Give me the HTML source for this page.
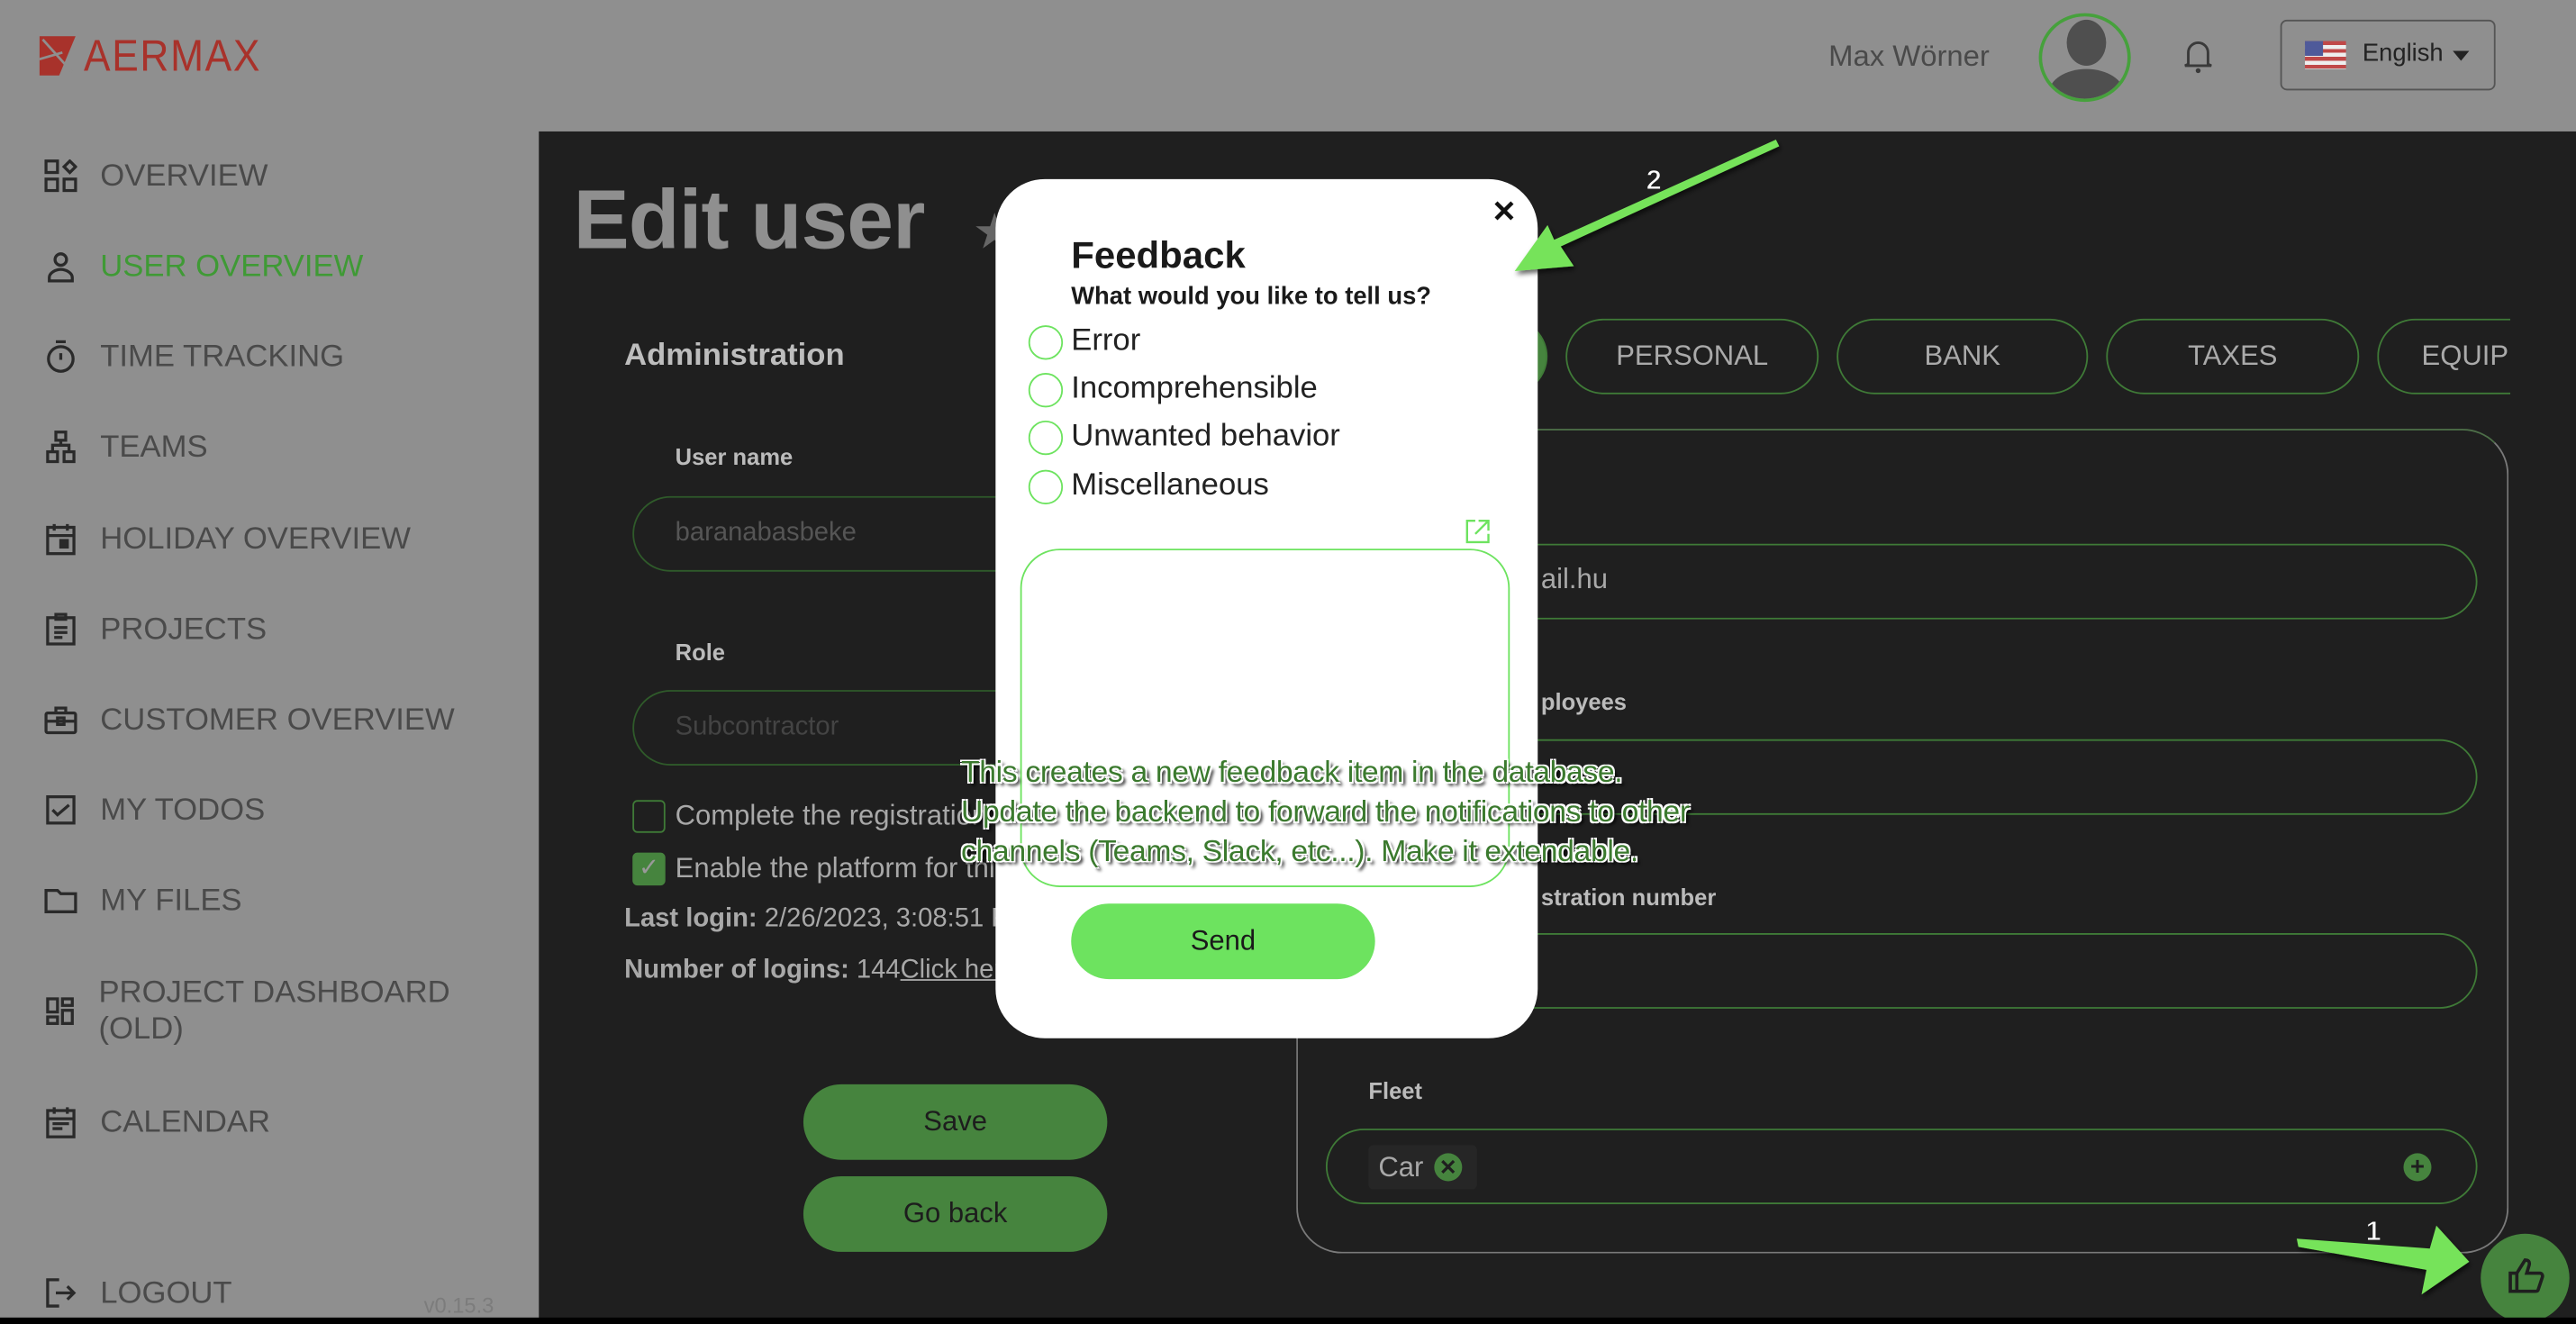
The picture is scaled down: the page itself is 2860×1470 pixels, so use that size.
<!DOCTYPE html>
<html><head><meta charset="utf-8">
<style>
*{margin:0;padding:0;box-sizing:border-box}
html,body{width:2860px;height:1470px;overflow:hidden;background:#8f8f8f;font-family:"Liberation Sans",Arial,sans-serif}
#s{position:absolute;left:0;top:0;width:1568px;height:806px;transform:scale(1.82398);transform-origin:0 0;background:#8f8f8f}
.a{position:absolute;white-space:nowrap}
.nav{position:absolute;left:61px;font-size:19px;color:#4a4a4a;line-height:22px}
.ic{position:absolute;left:27px;width:20px;height:20px}
.main{position:absolute;left:328px;top:80px;width:1240px;height:726px;background:#1f1f1f}
.inp{position:absolute;border:1px solid #2f5a2a;border-radius:23px}
.inpg{position:absolute;border:1.5px solid #3f7a37;border-radius:23px}
.tab{position:absolute;top:194px;height:46px;border:1.5px solid #3f7a37;border-radius:23px;color:#aaa;font-size:17px;text-align:center;line-height:44px}
.lbl{position:absolute;font-size:14px;font-weight:bold;color:#bbb}
.btn{position:absolute;left:489px;width:185px;height:46px;border-radius:23px;background:#46843e;color:#1d1d1d;font-size:17px;text-align:center;line-height:46px}
.rad{position:absolute;left:626px;width:21px;height:21px;border:1.5px solid #6de35f;border-radius:50%}
.rt{position:absolute;left:652px;font-size:19px;color:#222}
.ann{position:absolute;left:585px;font-size:18.5px;color:#3b7a2e;line-height:24px;white-space:nowrap;letter-spacing:-0.2px;text-shadow:1px 1px 0 #fff,-1px -1px 0 #fff,1px -1px 0 #fff,-1px 1px 0 #fff,2px 2px 2px #000}
</style></head><body><div id="s">
<svg class="a" style="left:24px;top:22px" width="24" height="24" viewBox="0 0 24 24"><path d="M0 0H22L12 24H0Z" fill="#a8322b"/><path d="M2 2L20 22M0 14L14 10" stroke="#8f8f8f" stroke-width="1.5"/></svg>
<div class="a" style="left:51px;top:19px;font-size:27px;color:#a8322b;letter-spacing:1px;transform:scaleX(0.9);transform-origin:0 0">AERMAX</div>
<div class="a" style="left:1113px;top:24px;font-size:18px;color:#4a4a4a">Max Wörner</div>
<div class="a" style="left:1241px;top:8px;width:56px;height:54px;border:2px solid #46a13c;border-radius:50%;overflow:hidden;background:#8f8f8f">
<div style="position:absolute;left:15px;top:2px;width:24px;height:28px;border-radius:50%;background:#4f4f4f"></div>
<div style="position:absolute;left:4px;top:32px;width:46px;height:30px;border-radius:50% 50% 0 0;background:#4f4f4f"></div></div>
<svg class="a" style="left:1328px;top:23px" width="20" height="22" viewBox="0 0 20 22"><path d="M4 16V9a6 6 0 0 1 12 0v7l2 1H2Z" fill="none" stroke="#3a3a3a" stroke-width="1.6"/><circle cx="10" cy="20" r="1.5" fill="#3a3a3a"/></svg>
<div class="a" style="left:1388px;top:12px;width:131px;height:43px;border:1.5px solid #555;border-radius:4px"></div>
<div class="a" style="left:1403px;top:25px;width:25px;height:17px;background:repeating-linear-gradient(#c04848 0 2.4px,#eee 2.4px 4.8px)"><div style="width:11px;height:9px;background:#4f5a9a"></div></div>
<div class="a" style="left:1438px;top:24px;font-size:15px;color:#222">English</div>
<div class="a" style="left:1493px;top:31px;border-left:5px solid transparent;border-right:5px solid transparent;border-top:6px solid #222"></div>
<svg class="ic" style="top:97px" viewBox="0 0 20 20" fill="none" stroke="#2a2a2a" stroke-width="1.8"><rect x="1" y="1" width="7" height="7"/><rect x="1" y="12" width="7" height="7"/><rect x="12" y="12" width="7" height="7"/><path d="M15.5 1L19 4.5 15.5 8 12 4.5Z"/></svg>
<div class="nav" style="top:97px">OVERVIEW</div>
<svg class="ic" style="top:152px" viewBox="0 0 20 20" fill="none" stroke="#2a2a2a" stroke-width="1.8"><circle cx="10" cy="6" r="3.5"/><path d="M3 19v-2c0-3 4-5 7-5s7 2 7 5v2Z"/></svg>
<div class="nav" style="top:152px;color:#3f9a35">USER OVERVIEW</div>
<svg class="ic" style="top:207px" viewBox="0 0 20 20" fill="none" stroke="#2a2a2a" stroke-width="1.8"><circle cx="10" cy="11.5" r="7.5"/><path d="M7 1h6M10 8v4"/></svg>
<div class="nav" style="top:207px">TIME TRACKING</div>
<svg class="ic" style="top:262px" viewBox="0 0 20 20" fill="none" stroke="#2a2a2a" stroke-width="1.8"><rect x="7" y="1" width="6" height="5"/><rect x="2" y="13" width="6" height="6"/><rect x="12" y="13" width="6" height="6"/><path d="M10 6v3M5 13V9h10v4"/></svg>
<div class="nav" style="top:262px">TEAMS</div>
<svg class="ic" style="top:318px" viewBox="0 0 20 20" fill="none" stroke="#2a2a2a" stroke-width="1.8"><rect x="2" y="3" width="16" height="16"/><path d="M6 1v4M14 1v4M2 8h16"/><rect x="10" y="11" width="4" height="4" fill="#2a2a2a"/></svg>
<div class="nav" style="top:318px">HOLIDAY OVERVIEW</div>
<svg class="ic" style="top:373px" viewBox="0 0 20 20" fill="none" stroke="#2a2a2a" stroke-width="1.8"><rect x="2" y="3" width="16" height="16"/><path d="M7 1h6v3H7ZM6 9h8M6 12h8M6 15h5"/></svg>
<div class="nav" style="top:373px">PROJECTS</div>
<svg class="ic" style="top:428px" viewBox="0 0 20 20" fill="none" stroke="#2a2a2a" stroke-width="1.8"><rect x="1" y="6" width="18" height="12" rx="1"/><path d="M7 6V3h6v3M1 11h18"/><rect x="8" y="9" width="4" height="4"/></svg>
<div class="nav" style="top:428px">CUSTOMER OVERVIEW</div>
<svg class="ic" style="top:483px" viewBox="0 0 20 20" fill="none" stroke="#2a2a2a" stroke-width="1.8"><rect x="2" y="2" width="16" height="16"/><path d="M5 10l3 3 7-6"/></svg>
<div class="nav" style="top:483px">MY TODOS</div>
<svg class="ic" style="top:538px" viewBox="0 0 20 20" fill="none" stroke="#2a2a2a" stroke-width="1.8"><path d="M1 4h7l2 2h9v11H1Z"/></svg>
<div class="nav" style="top:538px">MY FILES</div>
<svg class="ic" style="top:606px" viewBox="0 0 20 20" fill="none" stroke="#2a2a2a" stroke-width="1.8"><rect x="2" y="2" width="6" height="8"/><rect x="2" y="13" width="6" height="4"/><rect x="11" y="2" width="6" height="4"/><rect x="11" y="9" width="6" height="8"/></svg>
<div class="nav" style="top:594px;left:60px">PROJECT DASHBOARD<br>(OLD)</div>
<svg class="ic" style="top:673px" viewBox="0 0 20 20" fill="none" stroke="#2a2a2a" stroke-width="1.8"><rect x="2" y="3" width="16" height="16"/><path d="M6 1v4M14 1v4M2 8h16M5 11h10M5 14h6"/></svg>
<div class="nav" style="top:673px">CALENDAR</div>
<svg class="ic" style="top:777px" viewBox="0 0 20 20" fill="none" stroke="#2a2a2a" stroke-width="1.8"><path d="M9 2H2v16h7M7 10h11M14 6l4 4-4 4"/></svg>
<div class="nav" style="top:777px">LOGOUT</div>
<div class="a" style="left:258px;top:787px;font-size:13px;color:#7c7c7c">v0.15.3</div>
<div class="main"></div>
<div class="a" style="left:349px;top:104px;font-size:51px;font-weight:bold;color:#8f8f8f;letter-spacing:-0.5px">Edit user</div>
<div class="a" style="left:592px;top:124px;font-size:30px;color:#666">★</div>
<div class="a" style="left:380px;top:206px;font-size:19px;font-weight:bold;color:#bdbdbd">Administration</div>
<div class="lbl" style="left:411px;top:270px">User name</div>
<div class="inp" style="left:385px;top:302px;width:300px;height:46px"></div>
<div class="a" style="left:411px;top:316px;font-size:16px;color:#555">baranabasbeke</div>
<div class="lbl" style="left:411px;top:389px">Role</div>
<div class="inp" style="left:385px;top:420px;width:300px;height:46px"></div>
<div class="a" style="left:411px;top:434px;font-size:16px;color:#444">Subcontractor</div>
<div class="a" style="left:385px;top:487px;width:20px;height:20px;border:1.5px solid #3f7a37;border-radius:3px"></div>
<div class="a" style="left:411px;top:487px;font-size:17px;color:#a8a8a8">Complete the registration</div>
<div class="a" style="left:385px;top:519px;width:20px;height:20px;background:#46843e;border-radius:3px;color:#999;font-size:15px;text-align:center;line-height:20px">✓</div>
<div class="a" style="left:411px;top:519px;font-size:17px;color:#a8a8a8">Enable the platform for this user</div>
<div class="a" style="left:380px;top:551px;font-size:16px;color:#a8a8a8"><b>Last login:</b> 2/26/2023, 3:08:51 PM</div>
<div class="a" style="left:380px;top:582px;font-size:16px;color:#a8a8a8"><b>Number of logins:</b> 144<u>Click here</u></div>
<div class="btn" style="top:660px">Save</div>
<div class="btn" style="top:716px">Go back</div>
<div class="tab" style="left:880px;width:62px;background:#46843e"></div>
<div class="tab" style="left:953px;width:154px">PERSONAL</div>
<div class="tab" style="left:1118px;width:153px">BANK</div>
<div class="tab" style="left:1282px;width:154px">TAXES</div>
<div style="position:absolute;left:1447px;top:190px;width:81px;height:54px;overflow:hidden"><div class="tab" style="left:0;top:4px;width:154px;text-align:left;padding-left:26px">EQUIPMENT</div></div>
<div class="a" style="left:789px;top:261px;width:738px;height:502px;border:1.5px solid #7a7a7a;border-top-color:#4d6e48;border-radius:28px"></div>
<div class="inpg" style="left:807px;top:331px;width:701px;height:46px"></div>
<div class="inpg" style="left:807px;top:450px;width:701px;height:46px"></div>
<div class="inpg" style="left:807px;top:568px;width:701px;height:46px"></div>
<div class="lbl" style="left:833px;top:656px">Fleet</div>
<div class="inpg" style="left:807px;top:687px;width:701px;height:46px"></div>
<div class="a" style="left:833px;top:697px;width:66px;height:27px;background:#262626;border-radius:3px"></div>
<div class="a" style="left:839px;top:701px;font-size:17px;color:#a8a8a8">Car</div>
<div class="a" style="left:873px;top:702px;width:17px;height:17px;border-radius:50%;background:#46843e;color:#1f1f1f;font-size:13px;font-weight:bold;text-align:center;line-height:17px">✕</div>
<div class="a" style="left:1463px;top:702px;width:17px;height:17px;border-radius:50%;background:#46843e;color:#1f1f1f;font-size:15px;font-weight:bold;text-align:center;line-height:17px">+</div>
<div class="a" style="left:1510px;top:751px;width:54px;height:54px;border-radius:50%;background:#46843e"></div>
<svg class="a" style="left:1526px;top:765px" width="24" height="24" viewBox="0 0 24 24" fill="none" stroke="#1f1f1f" stroke-width="2"><path d="M2 10h4v11H2ZM6 10l5-8c2 0 3 1 2.5 3L12 10h8c1 0 2 1 1.5 2.5l-2.5 7.5c-.3 1-1 1-2 1H6"/></svg>
<div class="a" style="left:0;top:802px;width:1568px;height:4px;background:#000"></div>
<div class="a" style="left:606px;top:109px;width:330px;height:523px;background:#fff;border-radius:30px"></div>
<div class="a" style="left:938px;top:343px;font-size:17px;color:#a8a8a8">ail.hu</div>
<div class="lbl" style="left:938px;top:419px">ployees</div>
<div class="lbl" style="left:938px;top:538px">stration number</div>
<div class="a" style="left:908px;top:119px;font-size:18px;font-weight:bold;color:#111">✕</div>
<div class="a" style="left:652px;top:142px;font-size:23px;font-weight:bold;color:#1a1a1a">Feedback</div>
<div class="a" style="left:652px;top:172px;font-size:15px;font-weight:bold;color:#1a1a1a">What would you like to tell us?</div>
<div class="rad" style="top:198px"></div><div class="rt" style="top:197px">Error</div>
<div class="rad" style="top:227px"></div><div class="rt" style="top:226px">Incomprehensible</div>
<div class="rad" style="top:256px"></div><div class="rt" style="top:255px">Unwanted behavior</div>
<div class="rad" style="top:286px"></div><div class="rt" style="top:285px">Miscellaneous</div>
<svg class="a" style="left:892px;top:316px" width="15" height="15" viewBox="0 0 15 15" fill="none" stroke="#6de35f" stroke-width="1.3"><path d="M6 1H1v13h13V9M8 1h6v6M14 1L6 9"/></svg>
<div class="a" style="left:621px;top:334px;width:298px;height:206px;border:1.5px solid #6de35f;border-radius:24px"></div>
<div class="a" style="left:652px;top:550px;width:185px;height:46px;border-radius:23px;background:#6de35f;color:#1a1a1a;font-size:17px;text-align:center;line-height:46px">Send</div>
<div class="ann" style="top:458px">This creates a new feedback item in the database.<br>Update the backend to forward the notifications to other<br>channels (Teams, Slack, etc...). Make it extendable.</div>
<svg class="a" style="left:0;top:0;overflow:visible" width="1568" height="806">
<defs><filter id="sh"><feDropShadow dx="1" dy="2" stdDeviation="1.5" flood-color="#000" flood-opacity="0.6"/></filter></defs>
<g filter="url(#sh)" fill="#76e35a">
<path d="M1081 85 L1083 89 L950 150 L958 162 L922 165 L942 137 L946 146 Z"/>
<path d="M1398 754 L1399 759 L1477 773 L1474 788 L1503 768 L1483 746 L1479 760 Z"/>
</g>
<text x="1002" y="115" font-family="Liberation Sans" font-size="17" font-weight="bold" fill="#fff" stroke="#222" stroke-width="0.6">2</text>
<text x="1440" y="755" font-family="Liberation Sans" font-size="17" font-weight="bold" fill="#fff" stroke="#222" stroke-width="0.6">1</text>
</svg>
</div></body></html>
